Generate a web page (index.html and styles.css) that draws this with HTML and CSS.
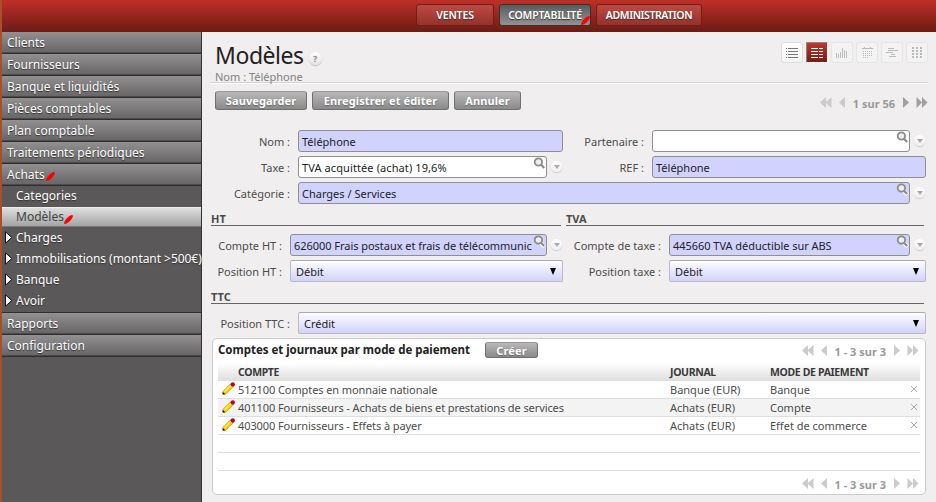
FILE: index.html
```html
<!DOCTYPE html>
<html lang="fr">
<head>
<meta charset="utf-8">
<title>Modèles</title>
<link rel="stylesheet" href="styles.css">
</head>
<body>
<svg class="defs" width="0" height="0">
  <symbol id="mag" viewBox="0 0 13 13"><path d="M8 8 L11.6 11.6" stroke="#fff" stroke-width="4"/><circle cx="5.4" cy="5" r="3.7" fill="#eee" stroke="#8b8b8b" stroke-width="1.8"/><path d="M8 7.8 L11.2 11" stroke="#8b8b8b" stroke-width="2.2"/></symbol>
  <symbol id="first" viewBox="0 0 12 11"><path d="M6 0V11L0 5.5ZM11.5 0V11L5.5 5.5Z"/></symbol>
  <symbol id="prev" viewBox="0 0 6 11"><path d="M6 0V11L0 5.5Z"/></symbol>
  <symbol id="next" viewBox="0 0 6 11"><path d="M0 0V11L6 5.5Z"/></symbol>
  <symbol id="last" viewBox="0 0 12 11"><path d="M.5 0V11L6 5.5ZM6 0V11L11.5 5.5Z"/></symbol>
  <symbol id="blot" viewBox="0 0 12 12"><ellipse cx="6" cy="6" rx="6.4" ry="2.2" transform="rotate(-45 6 6)" fill="#f00"/></symbol>
  <symbol id="pencil" viewBox="0 0 13 13"><path d="M1 9.2L8.3 1.9L11.3 4.9L4 12L1 12.2Z" fill="#fc0" stroke="#c98a00" stroke-width=".6"/><path d="M2.5 9.8L9 3.3" stroke="#ffef6a" stroke-width="1.3"/><path d="M7.9 2.3L10.8 5.2L12 4L9.1 1.1Z" fill="#5c8ed0"/><circle cx="10.8" cy="2.4" r="2.1" fill="#c8000a"/><path d="M.6 9.8L3.4 12.5H.6Z" fill="#111"/></symbol>
  <symbol id="tri" viewBox="0 0 8 13"><path d="M.5 .8V12.2L6.8 6.5Z" fill="#fff" stroke="#111" stroke-width="1"/></symbol>
</svg>
<header class="top">
  <a class="tab ventes">VENTES</a>
  <a class="tab active compta">COMPTABILITÉ<svg class="blot"><use href="#blot"/></svg></a>
  <a class="tab admin">ADMINISTRATION</a>
</header>
<div class="main">
  <nav class="side">
    <a class="item">Clients</a>
    <a class="item">Fournisseurs</a>
    <a class="item">Banque et liquidités</a>
    <a class="item">Pièces comptables</a>
    <a class="item">Plan comptable</a>
    <a class="item">Traitements périodiques</a>
    <a class="item">Achats<svg class="blot"><use href="#blot"/></svg></a>
    <div class="sub">
      <a>Categories</a>
      <a class="sel">Modèles<svg class="blot"><use href="#blot"/></svg></a>
      <a><svg class="tri"><use href="#tri"/></svg>Charges</a>
      <a class="long"><svg class="tri"><use href="#tri"/></svg>Immobilisations (montant &gt;500€)</a>
      <a><svg class="tri"><use href="#tri"/></svg>Banque</a>
      <a><svg class="tri"><use href="#tri"/></svg>Avoir</a>
    </div>
    <a class="item">Rapports</a>
    <a class="item">Configuration</a>
  </nav>
  <main class="content">
    <div class="head">
      <div class="titles">
        <h1>Modèles <span class="help">?</span></h1>
        <p class="subtitle">Nom : Téléphone</p>
      </div>
      <div class="views">
        <span class="view"><svg viewBox="0 0 20 20"><path d="M6 5.5H16M6 8.5H16M6 11.5H16M6 14.5H16" stroke="#777"/><path d="M4 5.5H5M4 8.5H5M4 11.5H5M4 14.5H5" stroke="#777"/></svg></span>
        <span class="view on"><svg viewBox="0 0 20 20"><path d="M4 5.5H11M4 8.5H11M4 11.5H11M4 14.5H11M12 5.5H16M12 8.5H16M12 11.5H16M12 14.5H16" stroke="#fff"/></svg></span>
        <span class="view off"><svg viewBox="0 0 20 20"><path d="M4.5 15V10M6.5 15V11M8.5 15V9M10.5 15V5M12.5 15V7M14.5 15V8" stroke="#bbb"/></svg></span>
        <span class="view off"><svg viewBox="0 0 20 20"><path d="M5 5.5H16" stroke="#bbb"/><path d="M7.5 4V6M13.5 4V6" stroke="#bbb"/><path d="M6 8.5H15M6 10.5H15M6 12.5H15M6 14.5H12" stroke="#bbb" stroke-dasharray="1 1"/></svg></span>
        <span class="view off"><svg viewBox="0 0 20 20"><path d="M6 5.5H12M6 7.5H16M4 9.5H11M9 11.5H13M7 13.5H14" stroke="#bbb"/></svg></span>
        <span class="view off"><svg viewBox="0 0 20 20"><path d="M5 5H15M5 8H15M5 11H15M5 14H15" stroke="#bbb" stroke-width="2" stroke-dasharray="2 2"/></svg></span>
      </div>
    </div>
    <div class="toolbar">
      <button class="btn b1">Sauvegarder</button>
      <button class="btn b2">Enregistrer et éditer</button>
      <button class="btn b3">Annuler</button>
      <div class="pager big"><svg class="w"><use href="#first"/></svg><svg><use href="#prev"/></svg><span>1 sur 56</span><svg class="dk"><use href="#next"/></svg><svg class="w dk"><use href="#last"/></svg></div>
    </div>
    <div class="form">
      <div class="row">
        <label>Nom :</label><div class="box req w265">Téléphone</div>
        <label class="mid">Partenaire :</label><div class="box grow"><svg class="mag"><use href="#mag"/></svg></div><i class="drop"></i>
      </div>
      <div class="row">
        <label>Taxe :</label><div class="box w249 taxe">TVA acquittée (achat) 19,6%<svg class="mag"><use href="#mag"/></svg></div><i class="drop"></i>
        <label class="mid">REF :</label><div class="box req grow">Téléphone</div>
      </div>
      <div class="row">
        <label>Catégorie :</label><div class="box req grow">Charges / Services<svg class="mag"><use href="#mag"/></svg></div><i class="drop"></i>
      </div>
      <div class="groups">
        <h2 class="g1">HT</h2><h2 class="g2">TVA</h2>
      </div>
      <div class="row">
        <label class="ht">Compte HT :</label><div class="box req w257 long-text">626000 Frais postaux et frais de télécommunic<svg class="mag"><use href="#mag"/></svg></div><i class="drop"></i>
        <label class="tva">Compte de taxe :</label><div class="box req grow long-text">445660 TVA déductible sur ABS<svg class="mag"><use href="#mag"/></svg></div><i class="drop"></i>
      </div>
      <div class="row">
        <label class="ht">Position HT :</label><div class="select w273">Débit</div>
        <label class="tva">Position taxe :</label><div class="select grow">Débit</div>
      </div>
      <div class="groups"><h2 class="g3">TTC</h2></div>
      <div class="row">
        <label>Position TTC :</label><div class="select grow">Crédit</div>
      </div>
    </div>
    <section class="panel">
      <div class="phead">
        <h3>Comptes et journaux par mode de paiement</h3>
        <button class="btn small">Créer</button>
        <div class="pager"><svg class="w"><use href="#first"/></svg><svg><use href="#prev"/></svg><span>1 - 3 sur 3</span><svg><use href="#next"/></svg><svg class="w"><use href="#last"/></svg></div>
      </div>
      <div class="tr th"><span></span><span>COMPTE</span><span>JOURNAL</span><span>MODE DE PAIEMENT</span><span></span></div>
      <div class="tr"><svg class="pencil"><use href="#pencil"/></svg><span class="acct">512100 Comptes en monnaie nationale</span><span>Banque (EUR)</span><span>Banque</span><svg class="x" viewBox="0 0 8 8"><path d="M1 1L7 7M7 1L1 7"/></svg></div>
      <div class="tr alt"><svg class="pencil"><use href="#pencil"/></svg><span class="acct">401100 Fournisseurs - Achats de biens et prestations de services</span><span>Achats (EUR)</span><span>Compte</span><svg class="x" viewBox="0 0 8 8"><path d="M1 1L7 7M7 1L1 7"/></svg></div>
      <div class="tr"><svg class="pencil"><use href="#pencil"/></svg><span class="acct">403000 Fournisseurs - Effets à payer</span><span>Achats (EUR)</span><span>Effet de commerce</span><svg class="x" viewBox="0 0 8 8"><path d="M1 1L7 7M7 1L1 7"/></svg></div>
      <div class="tr"></div>
      <div class="tr"></div>
      <div class="pfoot"><div class="pager"><svg class="w"><use href="#first"/></svg><svg><use href="#prev"/></svg><span>1 - 3 sur 3</span><svg><use href="#next"/></svg><svg class="w"><use href="#last"/></svg></div></div>
    </section>
  </main>
</div>
</body>
</html>
```
FILE: styles.css
```css
* { box-sizing: border-box; }
body { margin: 0; width: 936px; height: 502px; overflow: hidden; border-left: 2px solid #a94e2b; font-family: "Noto Sans", sans-serif; font-size: 11px; color: #4c4c4c; background: #f0eeee; display: flex; flex-direction: column; }
.defs { position: absolute; }
h1, h2, h3, p { margin: 0; }
.top { flex: none; height: 32px; background: linear-gradient(#bd3027, #6d1b15); display: flex; padding: 4px 0 0 414px; gap: 5px; }
.tab { height: 22px; border: 1px solid #701d17; border-radius: 3px; background: linear-gradient(#bd4a42, #95322b); color: #fff; font-weight: 600; font-size: 10.5px; letter-spacing: -.15px; line-height: 20px; text-align: center; text-shadow: 0 1px 1px #333; position: relative; white-space: nowrap; }
.ventes { width: 78px; } .compta { width: 92px; } .admin { width: 106px; }
.admin { letter-spacing: -.4px; }
.tab.active { background: linear-gradient(#5b5b5b, #929292); border-color: #333; }
.tab .blot { position: absolute; right: -1px; bottom: -1px; width: 11px; height: 11px; }
.main { flex: 1; display: flex; min-height: 0; }
.side { width: 200px; background: #5a5858; border-right: 1px solid #333; font-size: 12px; color: #fff; text-shadow: 0 1px 1px #333; flex: none; }
.item { display: flex; height: 22px; padding-left: 5px; line-height: 21px; background: linear-gradient(#929090, #666464); border-bottom: 1px solid #302e2e; box-shadow: inset 0 -1px #4b4949; }
.side .blot { width: 11px; height: 11px; margin: 7px 0 0 0; }
.side .sel .blot { margin: 6px 0 0 -1px; }
.sub { height: 127px; border-bottom: 1px solid #302e2e; }
.sub a { display: flex; height: 21px; line-height: 20px; padding-left: 14px; position: relative; white-space: nowrap; }
.sub .long { letter-spacing: -.05px; }
.sub .sel { background: linear-gradient(#dedede, #a4a4a4); color: #444; text-shadow: none; border-top: 1px solid #eee; border-bottom: 1px solid #777; height: 20px; line-height: 18px; margin-bottom: 1px; }
.tri { position: absolute; left: 3px; top: 3px; width: 8px; height: 13px; }
.content { flex: 1; padding: 0 10px 0 9px; }
.head { height: 52px; margin-left: -1px; margin-right: -2px; padding-left: 5px; border-bottom: 1px solid #fff; box-shadow: inset 0 -1px #d6d3d3; display: flex; justify-content: space-between; }
h1 { font-size: 23px; letter-spacing: -.45px; font-weight: 400; line-height: 29px; color: #222; padding-top: 9px; height: 38px; white-space: nowrap; display: flex; }
.help { width: 13px; height: 13px; border-radius: 50%; margin: 11px 0 0 5px; background: linear-gradient(#fff, #e4e4e4); box-shadow: 0 1px 1px #bbb; font-size: 9px; font-weight: 700; color: #888; line-height: 13px; text-align: center; letter-spacing: 0; }
.subtitle { font-size: 11px; line-height: 13px; color: #828282; height: 13px; }
.views { display: flex; gap: 3px; padding-top: 10px; }
.view { width: 22px; height: 21px; border: 1px solid #ddd; border-radius: 3px; background: linear-gradient(#fff, #f4f4f4); display: flex; }
.view.on { border-radius: 1px; border-color: #888 #fff #fff #888; background: linear-gradient(#c2362c, #7b1a14); }
.view.off { border-color: #e6e4e4; background: #f4f3f3; }
.view svg { width: 20px; height: 20px; margin-top: 0; }
.toolbar { display: flex; gap: 5px; height: 46px; padding: 7px 0 0 4px; }
.btn { height: 19px; padding: 0; border: 1px solid #6f6f6f; border-top-color: #999; border-radius: 3px; background: linear-gradient(#b8b8b8, #8a8a8a); color: #fff; font: 700 11px/17px "Noto Sans", sans-serif; text-shadow: 0 1px 1px #666; white-space: nowrap; letter-spacing: .1px; }
.b1 { width: 92px; } .b2 { width: 137px; } .b3 { width: 67px; }
.pager { display: flex; margin-left: auto; fill: #cbcbcb; color: #999; font-weight: 700; font-size: 11px; white-space: nowrap; }
.pager svg { width: 6px; height: 11px; flex: none; }
.pager svg.w { width: 12px; }
.pager .dk { fill: #a0a0a0; }
.pager span { margin: 0 8px; line-height: 14px; }
.pager svg.w:first-child { margin-right: 7px; }
.pager svg.w:last-child { margin-left: 7px; }
.pager.big { margin-right: -2px; margin-top: 6px; }
.form { height: 208px; }
.row { display: flex; height: 22px; margin-bottom: 4px; width: 715px; }
label { width: 87px; padding-right: 8px; text-align: right; line-height: 23px; white-space: nowrap; flex: none; }
label.mid { width: 89px; } label.ht { width: 79px; } label.tva { width: 106px; }
.box { border: 1px solid #8f8f8f; border-radius: 3px; background: #fff; color: #222; padding-left: 3px; line-height: 21px; position: relative; white-space: nowrap; overflow: hidden; flex: none; }
.req { background: #d2d2ff; }
.taxe { letter-spacing: .1px; }
.long-text { letter-spacing: -.04px; }
.box.grow, .select.grow { flex: 1; }
.w265 { width: 265px; } .w249 { width: 249px; } .w257 { width: 257px; } .w273 { width: 273px; }
.mag { position: absolute; right: 0; top: 0; width: 13px; height: 13px; }
.drop { width: 11px; height: 11px; margin: 5px 1px 0 4px; border-radius: 50%; background: linear-gradient(#fff, #eee); box-shadow: 0 1px 1px #ccc; flex: none; display: flex; justify-content: center; align-items: center; }
.drop::after { content: ""; border: 3px solid transparent; border-top: 4px solid #aaa; border-bottom: 0; }
.select { border: 1px solid #bbb; border-top-color: #aaa; border-radius: 2px; background: linear-gradient(#fdfdff, #d2d2fc); color: #222; padding-left: 5px; line-height: 21px; position: relative; flex: none; }
.select::after { content: ""; position: absolute; right: 6px; top: 7px; border: 3.5px solid transparent; border-top: 7px solid #000; border-bottom: 0; }
.groups { display: flex; gap: 5px; height: 22px; margin-bottom: 4px; }
h2 { font-size: 11px; line-height: 22px; font-weight: 700; height: 18px; border-bottom: 1px solid #666; }
.g1 { width: 350px; } .g2 { width: 358px; } .g3 { width: 713px; }
.panel { margin-left: 1px; width: 714px; height: 157px; background: #fff; border: 1px solid #ccc; border-radius: 5px; padding: 0 5px; }
.phead { height: 24px; display: flex; padding-right: 1px; }
h3 { font-size: 11.5px; letter-spacing: -.03px; line-height: 21px; color: #222; white-space: nowrap; width: 267px; }
.small { width: 53px; height: 16px; line-height: 15px; margin-top: 3px; }
.phead .pager { margin-top: 6px; }
.tr { display: grid; grid-template-columns: 20px 432px 100px 140px 1fr; height: 18px; border-bottom: 1px solid #dedede; line-height: 18px; white-space: nowrap; }
.acct { letter-spacing: -.09px; }
.alt { background: #f3f3f3; }
.th { height: 18px; line-height: 19px; font-weight: 700; font-size: 10.5px; letter-spacing: -.35px; color: #3a3a3a; background: linear-gradient(#fff, #dedede); border: 0; }
.pencil { width: 13px; height: 13px; margin: 1px 0 0 4px; }
.x { width: 8px; height: 8px; margin-top: 4px; stroke: #aaa; fill: none; }
.pfoot { display: flex; padding: 7px 1px 0 0; }
```
